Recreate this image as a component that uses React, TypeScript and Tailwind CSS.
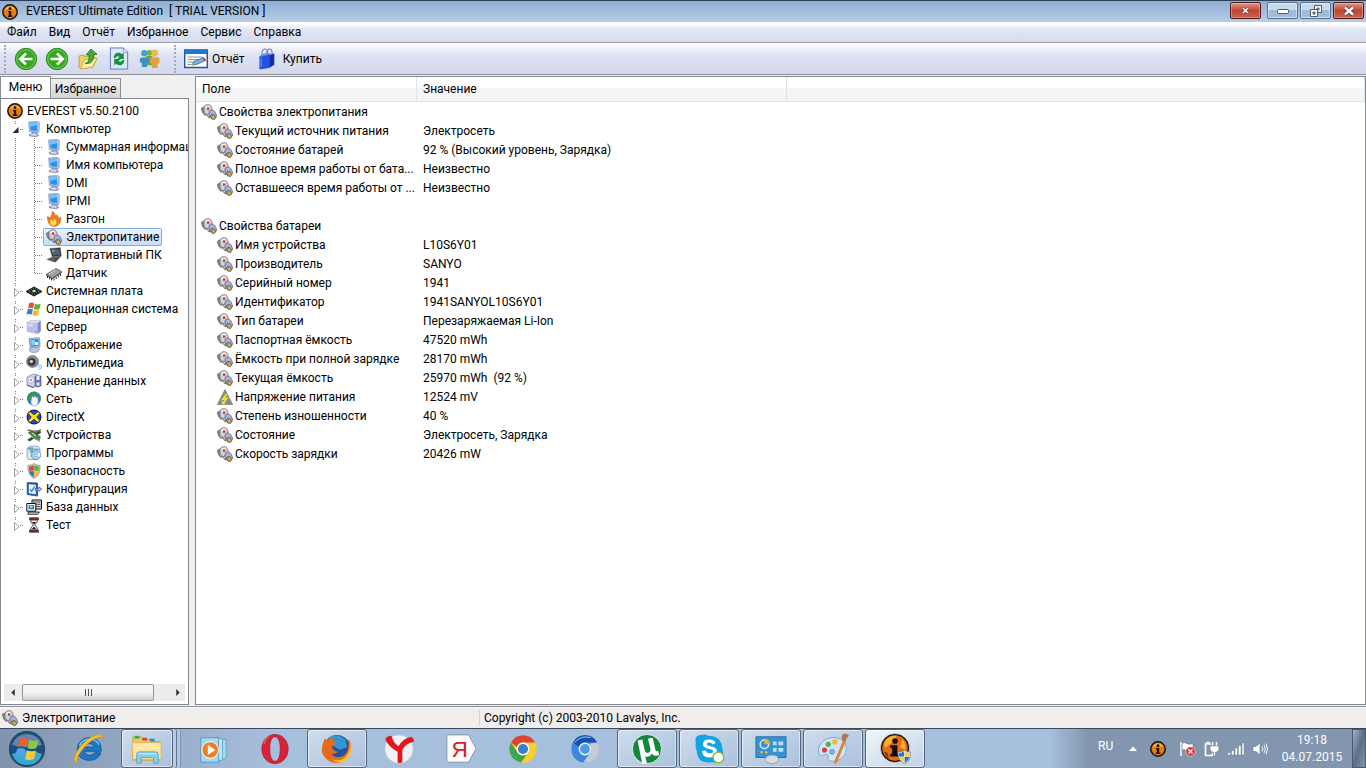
import { useState } from 'react'
import type { ReactNode } from 'react'
import clsx from 'clsx'

type IconName =
  | 'info' | 'pc' | 'flame' | 'power' | 'laptop' | 'chip' | 'board' | 'windows' | 'server'
  | 'display' | 'audio' | 'storage' | 'network' | 'directx' | 'devices' | 'programs'
  | 'security' | 'config' | 'database' | 'test' | 'voltage'

const shapes: Record<IconName, ReactNode> = {
  info: (
    <>
      <circle cx="8" cy="8" r="7.2" fill="#e87d12" stroke="#1d130a" strokeWidth="1.5" />
      <path d="M3 6a5.3 5.3 0 0 1 10 0q-5-3-10 0" fill="#ffc04a" />
      <circle cx="8" cy="4.6" r="1.4" fill="#111" />
      <path d="M6 7h3.2v4.4h1.2V13H5.8v-1.6h1.1V8.3H6z" fill="#111" />
    </>
  ),
  pc: (
    <>
      <path d="M2.600 1 11.800.4l1.600 1.200-.4 9.400-2.200.9L3.400 10.600z" fill="#b9c6e4" stroke="#7381ab" strokeWidth=".6" />
      <path d="m3.600 1.900 7.400-.5.300 8.600-6.700-.8z" fill="#2793ee" />
      <path d="m3.600 1.900 7.400-.5v2.900L4.100 6z" fill="#6cc2fb" />
      <path d="m6.200 10.800 4.600.7.7 2.200 1.300.6-2 1.400-7.200-.8-.4-1.500 3-.8z" fill="#a7b2d4" stroke="#66739c" strokeWidth=".6" />
      <path d="m5 13.500 5 .6" stroke="#f5f8ff" />
    </>
  ),
  flame: (
    <>
      <path d="M1.500 5.500c1.200.6 2.200 1 3 1.800C4.800 4.500 6.800 3.500 6 .5c3 1.500 3.800 4 3.500 6 1-.5 1.300-1.500 1.200-2.800 1.500 1.300 1.700 2.800 1.700 3.800 1-.2 1.700-.7 2.300-1.500.5 5-1.700 9.300-6.400 9.500C3.500 15.500 1.500 11 1.500 5.500z" fill="#ec8119" stroke="#bd5806" strokeWidth=".6" />
      <path d="M5.500 14c-2-2-1.500-4.500 0-6 .5 1.500 1.300 2 1.700 2.400.8-.8 1-1.900.900-3 2.300 1.800 3.600 5 .5 7.200-1 .4-2.200.2-3.100-.6z" fill="#ffdc4e" />
    </>
  ),
  power: (
    <>
      <path d="M0 4.500 3.500 2.500l1.300 4.300-3.300 1.400z" fill="#85868c" stroke="#5b5c62" strokeWidth=".6" />
      <path d="m1.500 8 2.500 3 2-.5" fill="none" stroke="#6c6d74" strokeWidth="1.200" />
      <path d="M3 3C4 .6 7.500 0 9.500 1.300l1.700 3.200-.9 4.700-4.300 1.400L3 8z" fill="#d3d4da" stroke="#6f717c" strokeWidth=".8" />
      <path d="m4.300 3 3.500-1.500 1.200 2-3.500 2.200z" fill="#fafafd" />
      <path d="M5.800 3.300h2.500v2.500H5.800z" fill="#d2382d" />
      <path d="M8.200 7.200c2-2 5.300-1.200 6.100 1.300l1.500 3.800-1.800 1.700-1.300-3.500-2.200.5.700 3-3.200-1.500z" fill="#a9b1d6" stroke="#5d6288" strokeWidth=".8" />
      <path d="m9.500 11.500 3-1 2.300 2.700-1.200 2.200-2.900-.4z" fill="#d0ad55" stroke="#4e4a41" strokeWidth=".8" />
      <path d="M5.800 10.500c.5 2 1.700 3 3.400 3.400" fill="none" stroke="#555a70" />
    </>
  ),
  laptop: (
    <>
      <path d="m3.800 1.500 10.500-.8 1 8.300-9 1z" fill="#25272b" stroke="#73767d" strokeWidth=".6" />
      <path d="m5 2.600 8.200-.6.800 5.900-7.200.7z" fill="#54606d" />
      <path d="m5.800 3 3.500-.3-2.300 3z" fill="#93a0ae" />
      <path d="m6.300 10 9-1-5.800 6.200L.7 12.400z" fill="#3c3e43" stroke="#888" strokeWidth=".5" />
      <path d="m5.500 11 6.500-.3M3.800 12l6.600.8" stroke="#a0a2a8" strokeDasharray="1 .6" strokeWidth=".8" />
    </>
  ),
  chip: (
    <>
      <path d="m.2 9.500 9.800-6 5.700 3.300-9.400 6.400z" fill="#9fa09b" stroke="#3b3b39" strokeWidth=".7" />
      <path d="m3 9.300 6.800-4.400" stroke="#d8d9d5" />
      <path d="m.2 9.700 6.100 3.500v1.100L.2 10.800zM6.300 13.200l9.400-6.400v1.300l-9.400 6.200z" fill="#4d4d49" />
      <path d="M1.500 11v2M3.500 12.300v2M5.500 13.400v2M8 13.500v2M10.200 12v2M12.400 10.500v2M14.500 9v2" stroke="#111" strokeWidth=".9" />
    </>
  ),
  board: (
    <>
      <path d="M0 8 8 3.500 16 8l-8 4.500z" fill="#101810" />
      <path d="M2.500 8 8 5l5.500 3L8 11z" fill="none" stroke="#4ba052" strokeWidth="1" strokeDasharray="1.500 1" />
      <path d="m5.500 8 2.500-1.400L10.500 8 8 9.400z" fill="#c8d8c8" />
      <path d="M0 8v1l8 4.500L16 9V8l-8 4.500z" fill="#000" />
    </>
  ),
  windows: (
    <>
      <path d="M3.200 2.200c1.800-1 3.200-.9 5 .2L7.100 7.600c-1.700-1-3.200-1.100-5-.2z" fill="#e0532d" />
      <path d="M9 2.800c1.800 1 3.500 1 5.800-.2l-1.300 5.200c-2 1.100-3.800 1.100-5.600.1z" fill="#68ac36" />
      <path d="M1.800 8.300c1.900-.9 3.400-.8 5.100.2l-1.300 5.300c-1.700-1-3.200-1-5.100-.2z" fill="#3c78cf" />
      <path d="M7.700 8.900c1.800 1 3.500 1 5.600-.1L12 14c-1.900 1.100-3.800 1.100-5.600.1z" fill="#f2b91f" />
    </>
  ),
  server: (
    <>
      <path d="m.8 3.500 4-2.200 10 .4-3.300 2.600z" fill="#e3e5fb" stroke="#9a9fce" strokeWidth=".5" />
      <path d="m.8 3.500 10.700.8v10.900L.8 12.700z" fill="#b9bdec" />
      <path d="m11.500 4.300 3.300-2.600v10.500l-3.300 3z" fill="#8087c4" />
      <path d="m2 5.200 5 .5M2 6.800l5 .5" stroke="#f1f2ff" strokeWidth=".8" />
      <path d="M9 12.500h1.200" stroke="#6569a5" />
    </>
  ),
  display: (
    <>
      <path d="m3 1.500 10.500-.7.5 9-9.700.7z" fill="#cbdaf0" stroke="#5477ad" strokeWidth=".7" />
      <path d="m4.200 2.600 8.200-.6.400 6.800-7.600.6z" fill="#1d8fe0" />
      <path d="m5 3.200 4-.3v5l-3.500.4z" fill="#7dd1ff" />
      <path d="M9 5h3v3H9z" fill="#e8f6ff" />
      <path d="M3 12c2-2 9-2 10.500-.4L12 14.800c-2 .8-6 .8-7.800 0z" fill="#bcc8df" stroke="#6b7da3" strokeWidth=".6" />
    </>
  ),
  audio: (
    <>
      <circle cx="6.500" cy="6.500" r="5.800" fill="#8f949b" stroke="#50545b" strokeWidth=".8" />
      <circle cx="5.800" cy="6.800" r="3.900" fill="#33373d" />
      <circle cx="5.300" cy="6.500" r="1.800" fill="#c4c8cf" />
      <path d="M10.500 11.800q1.500-.8 1.800-2.800M11.800 13.500q2.200-1.200 2.500-4M13 15.200q2.600-1.700 2.800-5" fill="none" stroke="#8b95dd" strokeWidth=".9" />
    </>
  ),
  storage: (
    <>
      <path d="m1 4 6-3 5 1v9l-5 3.500-6-2z" fill="#d3d6e8" stroke="#7e83a5" strokeWidth=".7" />
      <circle cx="5" cy="7" r="3" fill="#f7f8fd" stroke="#9094b1" strokeWidth=".6" />
      <circle cx="5" cy="7" r="1" fill="#7c81a0" />
      <path d="M9 3h6v10l-4 1-2-1z" fill="#6c73b7" stroke="#474c85" strokeWidth=".6" />
      <path d="M10.500 3h3v4h-3zM10.500 9.500h3v3h-3z" fill="#eceefa" />
      <path d="m1 12 7 2.600" stroke="#565b80" />
    </>
  ),
  network: (
    <>
      <circle cx="8" cy="7.500" r="7" fill="#2f7fb8" />
      <path d="M2 4C4 1 7 .3 9.500.8L8 3.500 5.500 4.500 5 8 2.500 9zM11 2l3 3 .5 4L12 8z" fill="#36994a" />
      <path d="M5.500 7.500 6.500 5l1.300 1.500L9 4.500l1.200 2.200 1.600-.5.400 4.300c-.3 2.500-1.200 4.300-3.400 4.500-2.500 0-3.600-2-3.900-4z" fill="#f6f8fb" stroke="#8b9aab" strokeWidth=".6" />
    </>
  ),
  directx: (
    <>
      <circle cx="8" cy="8" r="7.500" fill="#16268f" />
      <circle cx="8" cy="8" r="6" fill="#2f4ac4" />
      <path d="m4 2.500 4 3.300 4-3.300 2 2L10.700 8l3.300 3.600-2.200 2L8 10.200l-3.800 3.400-2.100-2L5.300 8 2 4.500z" fill="#fbe414" stroke="#15152a" strokeWidth=".7" />
    </>
  ),
  devices: (
    <>
      <path d="M.5 3.200C3 1.500 5 3 8 3.500s5-1 7.500-1.200L14 4.800 9.500 6.500z" fill="#6c726a" />
      <path d="m2 5.500 4-1 8.500 5.200-1 3-4-.4z" fill="#4a8a48" stroke="#2f4d2f" strokeWidth=".5" />
      <path d="m9 6 5.500-2 .5 2-4 2zM1 13l4.500-3 2.500 1.500L4 14.300z" fill="#3b4141" />
      <path d="m6 6 4 3" stroke="#d8e4d3" />
      <path d="m10 12 4 2.500" stroke="#8b8f8b" strokeWidth="1.300" />
    </>
  ),
  programs: (
    <>
      <path d="M1 3.500 4 1l8.500.5L14 4v8l-3 2.500H2.500L1 13z" fill="#d9e6fa" stroke="#6f91cc" strokeWidth=".7" />
      <path d="m1.500 4 12 .3M2 3h5" stroke="#4f83cf" />
      <path d="m4 5 3-.5.5 3-3 .5z" fill="#68ba50" />
      <circle cx="10" cy="10.200" r="4.600" fill="#a9cdf2" stroke="#4b81c0" strokeWidth=".7" />
      <path d="m10 10 3.500-2.600q1.400 2.200.2 4.300z" fill="#f1f8ff" />
      <circle cx="10" cy="10.200" r="1.300" fill="#fff" stroke="#5279ab" strokeWidth=".5" />
    </>
  ),
  security: (
    <>
      <path d="M8 .5C10 2 12 2.500 14 2.400c.4 6-1.500 10.500-6 13.100C3.500 12.900 1.600 8.400 2 2.400 4 2.500 6 2 8 .5z" fill="#d5d8de" stroke="#6d727b" strokeWidth=".7" />
      <path d="M7.800 2v5.800H3.200L3 3.500C5 3.400 6.500 2.900 7.800 2z" fill="#df4a2c" />
      <path d="M8.200 2v5.800h4.600l.2-4.300c-2-.1-3.500-.6-4.800-1.500z" fill="#68ad33" />
      <path d="M7.800 8.200v6C5.200 12.600 3.700 10.700 3.300 8.200z" fill="#2d6fd0" />
      <path d="M8.200 8.200v6c2.600-1.600 4.100-3.500 4.500-6z" fill="#f7bd23" />
    </>
  ),
  config: (
    <>
      <path d="m1.200 1.500 10.300.6v13l-10.300-1.600z" fill="#1d5fa9" stroke="#153f74" strokeWidth=".7" />
      <path d="m2.800 3.200 7 .5v9.600l-7-1.100z" fill="#eaf4fe" />
      <path d="m4 8 1.700 2.300L8.500 5.500" fill="none" stroke="#2b71bf" strokeWidth="1.200" />
      <path d="M9 7.500h3.500l.5-1.500 2.700 2-2.700 2.500-.5-1.300H9z" fill="#9fc0e4" stroke="#235387" strokeWidth=".7" />
    </>
  ),
  database: (
    <>
      <path d="M6 1h9.500v9H6z" fill="#d9d9d9" stroke="#111" />
      <path d="M7 3h7.500M7 5.300h7.500M7 7.600h7.500" stroke="#333" strokeWidth=".8" />
      <path d="M.8 4.500h9v7.700h-9z" fill="#f3f3f3" stroke="#111" />
      <path d="M2.600 6.200h5.500v4H2.600z" fill="#1589a8" />
      <path d="M4 7.200h2.500v1.500H4z" fill="#bdeff9" />
      <path d="M2.500 13h11l-1.800 2.300H1.800z" fill="#c8c8c8" stroke="#111" strokeWidth=".8" />
    </>
  ),
  test: (
    <>
      <path d="M3.500.8h9v2h-9zM3.500 13.200h9v2h-9z" fill="#a92e2b" stroke="#35100f" strokeWidth=".7" />
      <path d="M4.800 3v2L7.300 8l-2.500 3v2h6.400v-2L8.700 8l2.500-3V3z" fill="#f8f8f8" stroke="#222" strokeWidth=".8" />
      <path d="M6 5h4L8 7.400zM8 9.500l2.200 2.700H5.800z" fill="#151515" />
    </>
  ),
  voltage: (
    <>
      <path d="m8 .5 7.700 15H.3z" fill="#8c8c86" stroke="#74746f" strokeWidth=".6" />
      <path d="m9.800 5-4 5.300 4-.8-3.600 4.700" fill="none" stroke="#f4ee28" strokeWidth="1.500" />
      <path d="M5.500 12.500v2.300h2.800" fill="none" stroke="#f4ee28" />
    </>
  ),
}

function Icon({ name, className = 'size-4' }: { name: IconName; className?: string }) {
  return (
    <svg viewBox="0 0 16 16" className={clsx('shrink-0', className)} aria-hidden="true">
      {shapes[name]}
    </svg>
  )
}

const computerItems: { label: string; icon: IconName }[] = [
  { label: 'Суммарная информация', icon: 'pc' },
  { label: 'Имя компьютера', icon: 'pc' },
  { label: 'DMI', icon: 'pc' },
  { label: 'IPMI', icon: 'pc' },
  { label: 'Разгон', icon: 'flame' },
  { label: 'Электропитание', icon: 'power' },
  { label: 'Портативный ПК', icon: 'laptop' },
  { label: 'Датчик', icon: 'chip' },
]

const sections: { label: string; icon: IconName }[] = [
  { label: 'Системная плата', icon: 'board' },
  { label: 'Операционная система', icon: 'windows' },
  { label: 'Сервер', icon: 'server' },
  { label: 'Отображение', icon: 'display' },
  { label: 'Мультимедиа', icon: 'audio' },
  { label: 'Хранение данных', icon: 'storage' },
  { label: 'Сеть', icon: 'network' },
  { label: 'DirectX', icon: 'directx' },
  { label: 'Устройства', icon: 'devices' },
  { label: 'Программы', icon: 'programs' },
  { label: 'Безопасность', icon: 'security' },
  { label: 'Конфигурация', icon: 'config' },
  { label: 'База данных', icon: 'database' },
  { label: 'Тест', icon: 'test' },
]

type Row = { field: string; value?: string; head?: boolean; icon?: IconName }

const rows: Row[] = [
  { field: 'Свойства электропитания', head: true },
  { field: 'Текущий источник питания', value: 'Электросеть' },
  { field: 'Состояние батарей', value: '92 % (Высокий уровень, Зарядка)' },
  { field: 'Полное время работы от бата...', value: 'Неизвестно' },
  { field: 'Оставшееся время работы от ...', value: 'Неизвестно' },
  { field: '' },
  { field: 'Свойства батареи', head: true },
  { field: 'Имя устройства', value: 'L10S6Y01' },
  { field: 'Производитель', value: 'SANYO' },
  { field: 'Серийный номер', value: '1941' },
  { field: 'Идентификатор', value: '1941SANYOL10S6Y01' },
  { field: 'Тип батареи', value: 'Перезаряжаемая Li-Ion' },
  { field: 'Паспортная ёмкость', value: '47520 mWh' },
  { field: 'Ёмкость при полной зарядке', value: '28170 mWh' },
  { field: 'Текущая ёмкость', value: '25970 mWh  (92 %)' },
  { field: 'Напряжение питания', value: '12524 mV', icon: 'voltage' },
  { field: 'Степень изношенности', value: '40 %' },
  { field: 'Состояние', value: 'Электросеть, Зарядка' },
  { field: 'Скорость зарядки', value: '20426 mW' },
]

function TitleBar() {
  const glass = 'flex h-[17px] w-[31px] items-center justify-center rounded-[2px] border border-[#56708f] bg-linear-to-b from-[#c5d8ec] from-50% to-[#9dbbdb] to-50% inset-ring inset-ring-white/50'
  const red = 'flex h-[17px] w-[31px] items-center justify-center rounded-[2px] border border-[#4b1a1a] bg-linear-to-b from-[#d8988a] via-[#bf4530] via-50% to-[#c9634c] inset-ring inset-ring-white/30'
  return (
    <header className="flex h-[22px] shrink-0 items-center border-t border-[#2f3f55] bg-linear-to-b from-[#8fafd4] to-[#b7cde6] px-[2px]">
      <Icon name="info" />
      <h1 className="ml-2 flex-1 whitespace-pre pb-px">EVEREST Ultimate Edition  [ TRIAL VERSION ]</h1>
      <div className="flex items-start gap-[2px] pb-[2px]">
        <button className={clsx(red, 'mr-[4px]')} aria-label="Завершить">
          <svg viewBox="0 0 7 7" className="size-[7px]">
            <path d="m1 1 5 5M6 1 1 6" stroke="#6b3038" strokeWidth="2.600" /><path d="m1 1 5 5M6 1 1 6" stroke="#fff" strokeWidth="1.500" />
          </svg>
        </button>
        <button className={glass} aria-label="Свернуть">
          <svg viewBox="0 0 12 6" className="h-[6px] w-[12px]"><rect x=".5" y="1.500" width="11" height="4" rx="1" fill="#fff" stroke="#535766" /></svg>
        </button>
        <button className={glass} aria-label="Восстановить">
          <svg viewBox="0 0 12 12" className="size-[12px]">
            <path d="M4.500.5h7v7h-7z" fill="#fff" stroke="#535766" /><path d="M7 3h2v2H7z" fill="#9db7d3" stroke="#535766" />
            <path d="M.5 4.500h7v7h-7z" fill="#fff" stroke="#535766" /><path d="M3 7h2v2H3z" fill="#9db7d3" stroke="#535766" />
          </svg>
        </button>
        <button className={red} aria-label="Закрыть">
          <svg viewBox="0 0 12 10" className="h-[10px] w-[12px]">
            <path d="m2 1.500 8 7M10 1.500l-8 7" stroke="#5b3038" strokeWidth="4" /><path d="m2 1.500 8 7M10 1.500l-8 7" stroke="#fff" strokeWidth="2.400" />
          </svg>
        </button>
      </div>
    </header>
  )
}

function MenuBar() {
  return (
    <nav className="flex h-[21px] shrink-0 items-center border-b border-[#9c9fa8] bg-linear-to-b from-white from-10% via-[#e2e7f5] via-35% to-[#d6dbee] pl-px">
      {['Файл', 'Вид', 'Отчёт', 'Избранное', 'Сервис', 'Справка'].map(m => (
        <button key={m} className="px-[6px]">{m}</button>
      ))}
    </nav>
  )
}

const Grip = () => <div className="h-[28px] w-[2px] shrink-0 border-l-2 border-dotted border-[#a5a9b8]" />

function Toolbar() {
  const tool = 'flex h-[30px] w-[31px] items-center justify-center'
  return (
    <div className="flex h-[32px] shrink-0 items-center border-b border-[#8e9097] bg-linear-to-b from-white via-[#dde2f3] via-40% to-[#d3d8ed] pl-[4px]">
      <Grip />
      <div className="ml-[4px] mr-[9px] flex">
        <button className={tool} aria-label="Назад"><RoundArrow /></button>
        <button className={tool} aria-label="Вперёд"><RoundArrow flip /></button>
        <button className={tool} aria-label="Вверх">
          <svg viewBox="0 0 20 22" className="h-[22px] w-[20px]">
            <path d="m1 8 5-1 1 2 9-2v3l3 .5-4 8.500L3 21 1 19z" fill="#f1ce67" stroke="#bd9330" strokeWidth=".8" />
            <path d="m6 12 13-1.500-4.500 8.500L3 21z" fill="#fff0a8" stroke="#bd9330" strokeWidth=".6" />
            <path d="M7 15.500c3.500-1 4.500-4 4-8.500H8l5-6 6 5.300-3.500.4c.5 6-2.500 9.500-8.500 8.800z" fill="#45ad38" stroke="#1f7520" strokeWidth=".8" />
          </svg>
        </button>
        <button className={tool} aria-label="Обновить">
          <svg viewBox="0 0 20 24" className="h-[23px] w-[20px]">
            <path d="M1 1h13.500l4.500 4.500V23H1z" fill="#dce8fa" stroke="#6079b3" />
            <path d="M14.500 1v4.500H19z" fill="#fff" stroke="#7189bd" strokeWidth=".8" />
            <path d="M4.500 11.500c0-5.500 5.500-7 8.500-4l2-1.500v6.500H8.500l2-2.200c-2-1.300-3.500-.5-4 1.200zM15.500 13.500c0 5.500-5.500 7-8.500 4l-2 1.500v-6.500h6.500l-2 2.200c2 1.300 3.500.5 4-1.200z" fill="#129238" />
          </svg>
        </button>
        <button className={tool} aria-label="Пользователи">
          <svg viewBox="0 0 22 22" className="size-[21px]">
            <circle cx="11" cy="5" r="3" fill="#69b83c" /><path d="M7 9q4-2 8 0v9H7z" fill="#5fae38" />
            <circle cx="5.500" cy="5.500" r="3.300" fill="#4b9fd0" /><path d="M1 11q4.500-3 9.500 0v4l-2 1v4H3v-4l-2-1z" fill="#3d90c2" />
            <circle cx="16.500" cy="5" r="3.500" fill="#eeb84f" /><path d="M11.500 11q5-4 10 0v4.500l-2 1V21h-6v-4.500l-2-1z" fill="#e1a339" />
            <path d="M3 10q2-1 4 0M14 9.800q2-1 4 0" stroke="#fff" strokeOpacity=".5" fill="none" />
          </svg>
        </button>
      </div>
      <Grip />
      <button className="ml-[8px] flex items-center gap-[4px]">
        <svg viewBox="0 0 24 20" className="h-[20px] w-[24px]">
          <path d="M.7 1h22.600v17.500H.7z" fill="#fff" stroke="#1755a5" strokeWidth="1.400" />
          <path d="M.7 1h22.600v4H.7z" fill="#1f75d0" />
          <path d="M3.500 8h15M3.500 10.500h12M3.500 13h8M3.500 15.500h4" stroke="#8e949d" />
          <path d="m8 16 2-3.500 9.500-4 2.500 2.800-9.500 4.200z" fill="#6eb8ef" stroke="#27527f" strokeWidth=".7" />
          <path d="m18 9 1.500-.6 2.500 2.800-1.600.8z" fill="#dc3b32" /><path d="m8 16 1.200-2.200 1.800 1.600z" fill="#e29b43" />
        </svg>
        Отчёт
      </button>
      <button className="ml-[14px] flex items-center gap-[8px]">
        <svg viewBox="0 0 16 22" className="h-[22px] w-[16px]">
          <path d="m.8 8.500 10-1.700v12.700L.8 21z" fill="#2450e8" stroke="#1739b5" strokeWidth=".6" />
          <path d="m10.800 6.800 4.500-1.300v11.300l-4.500 2.700z" fill="#1230a3" />
          <path d="m.8 8.500 4-3 10.500 0-4.500 1.300z" fill="#5b88fb" />
          <path d="M3 10C2 3 4 1 6 1s3 2 3 6M7.500 5.500C8 2 9.500 1 11 1s2.500 2 2 5.500" fill="none" stroke="#6d7ba8" strokeWidth="1.100" />
          <path d="M2 10.500v8.500" stroke="#7ba1ff" />
        </svg>
        Купить
      </button>
    </div>
  )
}

function RoundArrow({ flip }: { flip?: boolean }) {
  return (
    <svg viewBox="0 0 24 24" className={clsx('size-[24px]', flip && 'rotate-180')}>
      <circle cx="12" cy="12" r="10.700" fill="#35a822" stroke="#2d8a22" strokeWidth="1" />
      <circle cx="12" cy="12" r="9.300" fill="none" stroke="#7fd25c" strokeWidth=".9" />
      <path d="M18.500 12H7M12 6.300 6.300 12l5.700 5.700" fill="none" stroke="#fff" strokeWidth="2.600" />
    </svg>
  )
}

const dots = { stroke: '#7d7d7d', strokeDasharray: '1 1' }

function Branch({ open }: { open?: boolean }) {
  return (
    <svg viewBox="0 0 22 18" className="h-[18px] w-[22px] shrink-0" aria-hidden="true">
      <path d="M14.500 1v3M19 9.500h3" {...dots} />
      {open ? <path d="M17.500 7v6h-6z" fill="#2b2b2b" /> : <path d="m13.500 6.500 4.500 4-4.500 4z" fill="#fff" stroke="#a0a0a0" />}
    </svg>
  )
}

function LeafBranch({ last }: { last: boolean }) {
  return (
    <svg viewBox="0 0 42 18" className="h-[18px] w-[42px] shrink-0" aria-hidden="true">
      <path d={last ? 'M14.500 0v18M33.500 0v9M34 9.500h8' : 'M14.500 0v18M33.500 0v18M34 9.500h8'} {...dots} />
    </svg>
  )
}

function TreeButton({ label, icon, active, onClick }: { label: string; icon: IconName; active?: boolean; onClick?: () => void }) {
  return (
    <button
      onClick={onClick}
      className={clsx(
        'flex h-[18px] items-center gap-[4px] whitespace-nowrap rounded-[2px] border px-[2px]',
        active ? 'border-[#84acdd] bg-linear-to-b from-[#eaf3fd] to-[#c5ddfa]' : 'border-transparent'
      )}
    >
      <Icon name={icon} />
      {label}
    </button>
  )
}

function Sidebar() {
  const [selected, setSelected] = useState('Электропитание')

  return (
    <aside className="flex w-[189px] shrink-0 flex-col">
      <div className="flex items-end" role="tablist">
        <button role="tab" aria-selected="true" className="h-[22px] w-[51px] border-l border-r border-t border-[#8a8f94] bg-white pb-px text-center">Меню</button>
        <button role="tab" aria-selected="false" className="h-[20px] w-[70px] border-r border-t border-[#8a8f94] bg-linear-to-b from-[#f0f0f0] to-[#d4d4d4] text-center">Избранное</button>
        <div className="flex-1" />
      </div>
      <div className="flex min-h-0 flex-1 flex-col border border-[#828790] bg-white">
        <ul className="min-h-0 flex-1 overflow-hidden pt-[3px]">
          <li className="flex pl-[3px]"><TreeButton label="EVEREST v5.50.2100" icon="info" /></li>
          <li>
            <div className="flex"><Branch open /><TreeButton label="Компьютер" icon="pc" /></div>
            <ul>
              {computerItems.map((item, i) => (
                <li key={item.label} className="flex">
                  <LeafBranch last={i === computerItems.length - 1} />
                  <TreeButton {...item} active={selected === item.label} onClick={() => setSelected(item.label)} />
                </li>
              ))}
            </ul>
          </li>
          {sections.map(s => (
            <li key={s.label} className="flex"><Branch /><TreeButton {...s} /></li>
          ))}
        </ul>
        <div className="mx-[3px] mb-[3px] flex h-[17px] shrink-0 items-stretch bg-[#ececec]">
          <button className="flex w-[18px] items-center justify-center" aria-label="Прокрутить влево">
            <svg viewBox="0 0 4 8" className="h-[7px] w-[4px]"><path d="M4 0v8L0 4z" fill="#333" /></svg>
          </button>
          <div className="flex w-[132px] items-center justify-center gap-[2px] rounded-[2px] border border-[#979797] bg-linear-to-b from-[#f4f4f4] from-50% to-[#d2d2d2]">
            <i className="h-[7px] w-px bg-[#555]" /><i className="h-[7px] w-px bg-[#555]" /><i className="h-[7px] w-px bg-[#555]" />
          </div>
          <div className="flex-1" />
          <button className="flex w-[15px] items-center justify-center" aria-label="Прокрутить вправо">
            <svg viewBox="0 0 4 8" className="h-[7px] w-[4px]"><path d="M0 0v8l4-4z" fill="#333" /></svg>
          </button>
        </div>
      </div>
    </aside>
  )
}

function Details() {
  const th = 'h-[25px] border-b border-r border-[#dfe2e7] bg-linear-to-b from-white from-45% to-[#f4f5f7] to-45% px-[6px] text-left font-normal'
  return (
    <main className="min-w-0 flex-1 overflow-hidden border border-[#828790] bg-white">
      <table className="w-full table-fixed border-separate border-spacing-0">
        <colgroup><col className="w-[221px]" /><col className="w-[370px]" /><col /></colgroup>
        <thead>
          <tr><th className={th}>Поле</th><th className={th}>Значение</th><th className={th} /></tr>
        </thead>
        <tbody>
          {rows.map((r, i) => (
            <tr key={i} className="h-[19px]">
              <td className={clsx('p-0', r.head ? 'pl-[5px]' : 'pl-[21px]')}>
                {r.field && (
                  <div className="flex h-[19px] items-center gap-[2px] whitespace-nowrap">
                    <Icon name={r.icon ?? 'power'} />
                    {r.field}
                  </div>
                )}
              </td>
              <td className="whitespace-pre p-0 pl-[6px]">{r.value}</td>
              <td className="p-0" />
            </tr>
          ))}
        </tbody>
      </table>
    </main>
  )
}

function StatusBar() {
  return (
    <footer className="flex h-[21px] shrink-0 items-center border-t border-[#fbfafa] bg-[#f0edec] pl-[2px]">
      <div className="flex w-[478px] items-center gap-[4px] border-r border-[#d5d2d1]"><Icon name="power" />Электропитание</div>
      <div className="pl-[4px]">Copyright (c) 2003-2010 Lavalys, Inc.</div>
    </footer>
  )
}

const apps: { name: string; open?: boolean; stacked?: boolean; art: ReactNode }[] = [
  {
    name: 'Internet Explorer',
    art: (
      <>
        <path d="M4.500 18C4.500 10 10 5 17.500 5S30.500 10 30 19.500H12.500c.5 5 8 5.500 10 1.500h7c-1.500 5-6 8-12 8-8 0-13-4.500-13-11zm8-3h9.500c-.5-5-9-5-9.500 0z" fill="#1d77c4" stroke="#0c4f93" strokeWidth=".8" />
        <path d="M7 14C9 8 13 6.500 18 6.500q7 .5 9.500 6" fill="none" stroke="#66c4f5" strokeWidth="1.600" />
        <path d="M5 31C-1 33 1 21 11 11S33-1 31.500 6c0-4-9-1.500-17 6.500S2 29 5 31z" fill="#f6c132" stroke="#d99a1e" strokeWidth=".8" />
      </>
    ),
  },
  {
    name: 'Проводник', open: true, stacked: true,
    art: (
      <>
        <path d="M2 4h9l2 3h8l2 2h8v20H2z" fill="#ecc963" stroke="#c69b3b" strokeWidth=".8" />
        <path d="M4 3h5v3H4z" fill="#3cae4a" /><path d="M12 5h5v3h-5z" fill="#d84731" /><path d="M20 6h5v3h-5z" fill="#3683cb" />
        <path d="M1 10h31v18H2z" fill="#f9e59a" stroke="#d2ac50" strokeWidth=".8" /><path d="M2 13h29M2 16h29" stroke="#fff3c4" />
        <path d="M6 32v-9q0-3 3-3h17q3 0 3 3v9h-5v-6H11v6z" fill="#88cdeb" stroke="#4d9dc5" strokeWidth=".8" />
        <path d="M8 22h19" stroke="#d9f3ff" />
      </>
    ),
  },
  {
    name: 'Проигрыватель',
    art: (
      <>
        <path d="M22 7h9v20h-9z" fill="#a9d9ef" stroke="#4f9dc2" strokeWidth=".8" /><path d="M19 6h8v23h-8z" fill="#c5e7f6" stroke="#4f9dc2" strokeWidth=".8" />
        <path d="M4 5h19v26H4z" fill="#a4d9f1" stroke="#4d9bc2" />
        <circle cx="14" cy="18" r="8.800" fill="#ef7f1e" stroke="#fff" /><path d="m11.500 12.500 8 5.500-8 5.500z" fill="#fff" />
      </>
    ),
  },
  {
    name: 'Opera',
    art: (
      <>
        <path fillRule="evenodd" d="M17 1.500c8 0 14 7 14 15.500s-6 15.500-14 15.500S3 25.500 3 17 9 1.500 17 1.500zM17 4c-4 0-5.500 6-5.500 13S13 30 17 30s5.500-6 5.500-13S21 4 17 4z" fill="#d92236" stroke="#a51626" strokeWidth=".7" />
        <path d="M5 12q1.500-6 6-8.500" fill="none" stroke="#f47b80" />
      </>
    ),
  },
  {
    name: 'Firefox', open: true,
    art: (
      <>
        <circle cx="17" cy="16" r="14" fill="#20539b" /><path d="M8 5q9-6 18 2l2 8-8 3-8-5z" fill="#3296d2" />
        <path d="M4 6q-5 10-2 17 5 9 16 9 14-2 14-17 0-6-3-9 2 16-7 19-7 2-11-3 4 1 7-2-4 0-6-4-1-3 2-3 2 0 3-2l-5-2q0-3 2-5-4 0-6 3-3 0-4-1z" fill="#e66a1c" />
        <path d="M29 7q5 12-5 20-7 4-13 0 8 8 17 1 7-9 1-21z" fill="#f9c52f" />
      </>
    ),
  },
  {
    name: 'Яндекс.Браузер',
    art: (
      <>
        <circle cx="17" cy="17" r="15" fill="#f1f1f3" stroke="#c9ccd2" strokeWidth=".8" />
        <path d="M2.500 7Q4 3 9 3q2 8 7.500 11Q21 6 30 4q3 2 3 5-9 2-12.500 9v13q-3 1.500-5 0V20Q6 15 2.500 7z" fill="#e8141b" />
      </>
    ),
  },
  {
    name: 'Яндекс',
    art: (
      <>
        <path d="M4 2h21l8 14.500L25 31H4q-2 0-2-2V4q0-2 2-2z" fill="#fdfdfd" stroke="#8a949f" />
        <text x="7" y="26" fontFamily="Liberation Sans, sans-serif" fontSize="24" fill="#df1818">Я</text>
      </>
    ),
  },
  {
    name: 'Chrome',
    art: (
      <>
        <circle cx="17" cy="17" r="14.500" fill="#f9d02d" />
        <path d="M4.300 10a14.500 14.500 0 0 1 25.600 0H17a7 7 0 0 0-6.500 5z" fill="#dc4437" />
        <path d="M4.300 10A14.500 14.500 0 0 0 15 31.400l6-8.200q-8 2-11-4z" fill="#3fa452" />
        <circle cx="17" cy="17" r="6.800" fill="#fff" /><circle cx="17" cy="17" r="5.400" fill="#3b7fc9" />
      </>
    ),
  },
  {
    name: 'Chromium',
    art: (
      <>
        <circle cx="17" cy="17" r="14.500" fill="#3c86de" />
        <path d="M4.300 10a14.500 14.500 0 0 1 25.600 0H17a7 7 0 0 0-6.500 5z" fill="#1551ad" />
        <path d="M30 10a14.500 14.500 0 0 1-15 21.400l6-8.200q5-5 1-12z" fill="#c4cbd4" />
        <circle cx="17" cy="17" r="6.800" fill="#e8f3ff" /><circle cx="17" cy="17" r="5.200" fill="#4f9ae4" /><path d="M6 10q7-8 17-5" stroke="#9bd0ff" fill="none" />
      </>
    ),
  },
  {
    name: 'uTorrent', open: true,
    art: (
      <>
        <circle cx="17" cy="17" r="15.500" fill="#14883a" stroke="#fff" strokeWidth=".8" />
        <path d="m7 8 5-1 2.500 11q1 4 4 3t2-5L18 6l5-1 3 13q.5 2 3 1l1 4q-5 3-8-1-2 4-7 3l2 7-5 1z" fill="#fff" />
      </>
    ),
  },
  {
    name: 'Skype', open: true,
    art: (
      <>
        <path d="M3 10Q1 2 9 2q4-1 7 1 14 0 15 13 2 5 0 10-3 7-11 5Q5 33 4 19q-2-5-1-9z" fill="#12a5e5" />
        <path d="M24 11q-1-4-7-4-6.500 0-6.500 5 0 4 7 5 4 .7 4 2.500 0 2.500-4.500 2-3-.3-3.500-3L9.500 19q.5 7 8 7t8-6.500q0-4.500-7-5.500-4-.7-4-2 0-2 3-1.800 2.500.2 3 2z" fill="#fff" />
        <circle cx="27" cy="26" r="5.700" fill="#fff" stroke="#80b82b" strokeWidth="1.400" />
      </>
    ),
  },
  {
    name: 'Панель управления', open: true,
    art: (
      <>
        <path d="M1 4h32v22H1z" fill="#3593d2" stroke="#266ea5" />
        <circle cx="10" cy="12" r="4.500" fill="none" stroke="#d8effb" strokeWidth="1.500" /><path d="M10 12V6q6 0 6 6z" fill="#f5a93b" />
        <path d="M19 9h4v4h-4zM25 9h5v4h-5zM19 16h4v4h-4zM25 16h5v4h-5z" fill="#b5e2fa" />
        <circle cx="7" cy="20.500" r="1.300" fill="#f4b53d" /><circle cx="12" cy="20.500" r="1.300" fill="#f4b53d" />
        <ellipse cx="18" cy="28" rx="7" ry="4.500" fill="#d9dde2" stroke="#8d959f" strokeWidth=".8" />
      </>
    ),
  },
  {
    name: 'Paint', open: true,
    art: (
      <>
        <path d="M15 5C6 6 0 14 2 22c1 3 4 2 6 1s5 0 4 3 2 4 6 4c8-1 14-7 13-15S23 4 15 5z" fill="#cde5f5" stroke="#7fa6c4" />
        <circle cx="8" cy="18" r="2.700" fill="#df3d3a" /><circle cx="12" cy="12" r="2.700" fill="#57ae44" /><circle cx="19" cy="9.500" r="2.800" fill="#f2b92c" /><circle cx="16" cy="20" r="2.600" fill="#7db5dc" stroke="#487fae" strokeWidth=".7" />
        <path d="m18 31 10-24 3 1-10 24q-3 1-3-1z" fill="#d9843a" /><path d="M27 8q-2-5 1-7 5-1 6 2-2 1-4 6z" fill="#ac7751" />
      </>
    ),
  },
  {
    name: 'EVEREST', open: true,
    art: (
      <>
        <circle cx="17" cy="16" r="14.500" fill="#e76c14" stroke="#16110d" strokeWidth="2" />
        <circle cx="17" cy="16" r="15.500" fill="none" stroke="#f0f0ef" strokeWidth=".7" />
        <path d="M6 9q5-7 13-6-3 4-1 6-5 1-12 7zM25 7q4 5 3 11l-6-3z" fill="#fbb031" /><path d="M5 20q6-1 5 8M23 19l5 1-5 8z" fill="#8b2e0a" />
        <circle cx="17" cy="8.500" r="3" fill="#0f0d0c" /><path d="M12 13h7.500v9H22v3H12v-3h2v-6h-2z" fill="#0f0d0c" />
        <g transform="translate(20 18)">
          <path d="M7 0q3 2.500 7 2.500Q14 11 7 15 0 11 0 2.500 4 2.500 7 0z" fill="#e6eaf0" stroke="#66707c" strokeWidth=".7" />
          <path d="M6.700 1.500V7H1.300V3.500Q4 3.500 6.700 1.500zM7.300 7.600h5q-1 4-5 6z" fill="#2b74c7" /><path d="M7.300 1.500V7h5.400V3.500q-3 0-5.400-2zM6.700 7.600h-5q1 4 5 6z" fill="#f8d33a" />
        </g>
      </>
    ),
  },
]

function Taskbar() {
  return (
    <div className="flex h-[40px] shrink-0 items-stretch border-t border-[#39475a] bg-[#a6bfdc] bg-linear-to-r from-[#8194ae] via-[#a6bfdc] via-20% to-[#a6bfdc]">
      <button className="flex w-[59px] shrink-0 items-center pl-[8px]" aria-label="Пуск">
        <svg viewBox="0 0 38 38" className="size-[38px]">
          <circle cx="19" cy="19" r="17.500" fill="#1d4f7c" stroke="#2a4766" strokeWidth="1.200" />
          <path d="M4 24q15-7 30 0-4 11-15 11T4 24z" fill="#37a9d4" /><path d="M4 15Q8 4 19 4t15 11q-15 4-30 0z" fill="#7f9fbe" fillOpacity=".7" />
          <path d="M12 8.500q4-2 8 .5l-2 8.500q-4-2.500-8.500-.5z" fill="#ea6030" /><path d="M21.500 9.500q4 2.500 9 0l-2 8.500q-5 2-9 0z" fill="#8fc640" />
          <path d="M9 19q4.500-2 8.500.5l-2 8.500q-4-2.500-8.500-.5z" fill="#4aa6e8" /><path d="M19 20.500q4 2 9 0l-2 8.500q-5 2-9 0z" fill="#fcc93a" />
        </svg>
      </button>
      <div className="flex min-w-0 flex-1 gap-[2px]">
        {apps.map(a => (
          <button key={a.name} aria-label={a.name} className="flex w-[60px] shrink-0">
            <span
              className={clsx(
                'flex h-full flex-1 items-center justify-center rounded-[3px] border',
                a.open ? 'border-[#52667f] inset-ring inset-ring-white/50' : 'border-transparent',
                a.open && (a.name === 'EVEREST'
                  ? 'bg-linear-to-br from-[#f1f6fb] to-[#c0d2e6]'
                  : 'bg-linear-to-br from-[#cfdded] to-[#abc0dc]')
              )}
            >
              <svg viewBox="0 0 34 34" className="size-[32px]">{a.art}</svg>
            </span>
            {a.stacked && (
              <>
                <span className="h-full w-[4px] rounded-r-[3px] border-r border-[#5b7391] bg-[#bccde1]" />
                <span className="h-full w-[4px] rounded-r-[3px] border-r border-[#7d95b2] bg-[#b2c6dd]" />
              </>
            )}
          </button>
        ))}
      </div>
      <Tray />
    </div>
  )
}

function Tray() {
  return (
    <div className="flex w-[316px] shrink-0 items-center bg-linear-to-r from-[#a6bfdc] to-[#8296b0] to-12% text-white">
      <span className="ml-[48px] w-[31px] pb-[6px]">RU</span>
      <button className="w-[21px]" aria-label="Показать скрытые значки">
        <svg viewBox="0 0 8 5" className="h-[5px] w-[8px]"><path d="m0 5 4-4.500L8 5z" fill="#fff" /></svg>
      </button>
      <Icon name="info" />
      <div className="ml-[13px] flex items-center gap-[8px]">
        <svg viewBox="0 0 17 16" className="h-[16px] w-[17px]">
          <path d="M2 1v14" stroke="#fff" strokeWidth="1.500" /><path d="M3 2q3-1 5 .5t6 0v7q-3 1-5 0T3 9z" fill="#fff" stroke="#536478" strokeWidth=".6" />
          <circle cx="11.500" cy="10.500" r="4.700" fill="#d93631" stroke="#fff" strokeWidth=".5" /><path d="m9.500 8.500 4 4m0-4-4 4" stroke="#fff" strokeWidth="1.300" />
        </svg>
        <svg viewBox="0 0 16 16" className="size-[16px]">
          <path d="M7 3H5V1.500H3V3H1.500v11.500h7V12" fill="none" stroke="#fff" strokeWidth="1.600" />
          <path d="M8.500 1v4M12.500 1v4" stroke="#fff" strokeWidth="1.400" /><path d="M6 5h9v3q0 3-3.500 3.300V15h-2v-3.700Q6 11 6 8z" fill="#fff" stroke="#61758c" strokeWidth=".6" />
        </svg>
        <svg viewBox="0 0 16 16" className="size-[16px]">
          <path d="M0 11.500h2.500V14H0zM3.500 9.500H6V14H3.500zM7 7h2.500v7H7zM10.500 4.500H13V14h-2.500zM14 2h2v12h-2z" fill="#fff" stroke="#52677e" strokeWidth=".4" />
        </svg>
        <svg viewBox="0 0 16 16" className="size-[16px]">
          <path d="M1 5.500h3L8 2v12l-4-3.500H1z" fill="#fff" stroke="#52677e" strokeWidth=".5" />
          <path d="M10 5.500q1.700 2.500 0 5M12 4q2.700 4 0 8M14 2.500q3 5.500 0 11" stroke="#fff" fill="none" strokeWidth=".9" />
        </svg>
      </div>
      <time className="flex-1 pl-[4px] text-center leading-[17px]">19:18<br />04.07.2015</time>
      <button className="h-full w-[14px] border border-[#4a5a6e] bg-linear-to-br from-[#a6b3c3] via-[#5c6f86] to-[#8093aa]" aria-label="Показать рабочий стол" />
    </div>
  )
}

export default function App() {
  return (
    <div className="flex h-screen flex-col overflow-hidden bg-[#f0f0f0] font-[Roboto,'Noto_Sans',sans-serif] text-[12px] leading-[16px] text-black">
      <TitleBar />
      <MenuBar />
      <Toolbar />
      <div className="flex min-h-0 flex-1 gap-[6px] border-b border-[#8a8c90] pb-px pt-px">
        <Sidebar />
        <Details />
      </div>
      <StatusBar />
      <Taskbar />
    </div>
  )
}
